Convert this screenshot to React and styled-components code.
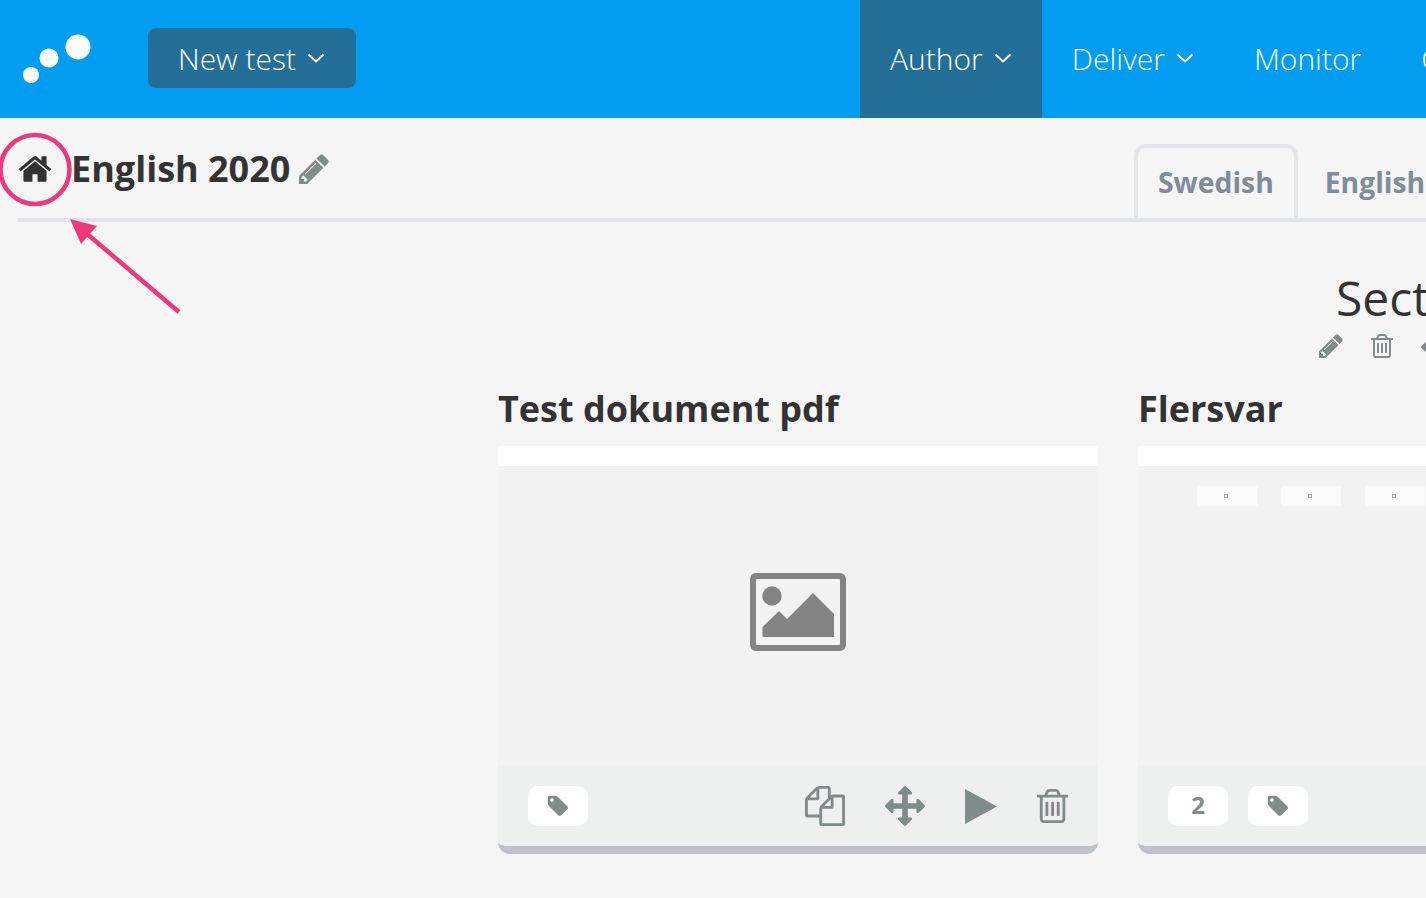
import React from "react"
import styled, { createGlobalStyle } from "styled-components"

const GlobalStyle = createGlobalStyle`
  html, body {
    margin: 0;
    height: 100%;
    overflow: hidden;
    background: #f5f5f5;
    font-family: "Open Sans", "Liberation Sans", sans-serif;
    color: #333333;
  }
`

// each icon keeps its own tight box, so the gaps between icons are real gaps
const ICONS = {
  home: {
    box: [0, 0, 1792, 1792],
    d: "M1472 992v480q0 26-19 45t-45 19h-384v-384h-256v384h-384q-26 0-45-19t-19-45v-480q0-1 .5-3t.5-3l575-474 575 474q1 2 1 6zm223-69l-62 74q-8 9-21 11h-3q-13 0-21-7l-692-577-692 577q-12 8-24 7-13-2-21-11l-62-74q-8-10-7-23.5t11-21.5l719-599q32-26 76-26t76 26l244 204v-195q0-14 9-23t23-9h192q14 0 23 9t9 23v408l219 182q10 8 11 21.5t-7 23.5z",
  },
  pencil: {
    box: [128, 128, 1516, 1536],
    d: "M491 1536l91-91-235-235-91 91v107h128v128h107zm523-928q0-22-22-22-10 0-17 7l-542 542q-7 7-7 17 0 22 22 22 10 0 17-7l542-542q7-7 7-17zm-54-192l416 416-832 832h-416v-416zm683 96q0 53-37 90l-166 166-416-416 166-165q36-38 90-38 53 0 91 38l235 234q37 39 37 91z",
  },
  trash: {
    box: [192, 128, 1408, 1536],
    d: "M704 736v576q0 14-9 23t-23 9h-64q-14 0-23-9t-9-23v-576q0-14 9-23t23-9h64q14 0 23 9t9 23zm256 0v576q0 14-9 23t-23 9h-64q-14 0-23-9t-9-23v-576q0-14 9-23t23-9h64q14 0 23 9t9 23zm256 0v576q0 14-9 23t-23 9h-64q-14 0-23-9t-9-23v-576q0-14 9-23t23-9h64q14 0 23 9t9 23zm128 724v-948h-896v948q0 22 7 40.5t14.5 27 10.5 8.5h832q3 0 10.5-8.5t14.5-27 7-40.5zm-672-1076h448l-48-117q-7-9-17-11h-317q-10 2-17 11zm928 32v64q0 14-9 23t-23 9h-96v948q0 83-47 143.5t-113 60.5h-832q-66 0-113-58.5t-47-141.5v-952h-96q-14 0-23-9t-9-23v-64q0-14 9-23t23-9h309l70-167q15-37 54-63t79-26h320q40 0 79 26t54 63l70 167h309q14 0 23 9t9 23z",
  },
  tag: {
    box: [0, 0, 1792, 1792],
    d: "M576 448q0-53-37.5-90.5t-90.5-37.5-90.5 37.5-37.5 90.5 37.5 90.5 90.5 37.5 90.5-37.5 37.5-90.5zm1067 576q0 53-37 90l-491 492q-39 37-91 37-53 0-90-37l-715-716q-38-37-64.5-101t-26.5-117v-416q0-52 38-90t90-38h416q53 0 117 26.5t102 64.5l715 714q37 39 37 91z",
  },
  move: {
    box: [0, 0, 1792, 1792],
    d: "M1792 896q0 26-19 45l-256 256q-19 19-45 19t-45-19-19-45v-128h-384v384h128q26 0 45 19t19 45-19 45l-256 256q-19 19-45 19t-45-19l-256-256q-19-19-19-45t19-45 45-19h128v-384h-384v128q0 26-19 45t-45 19-45-19l-256-256q-19-19-19-45t19-45l256-256q19-19 45-19t45 19 19 45v128h384v-384h-128q-26 0-45-19t-19-45 19-45l256-256q19-19 45-19t45 19l256 256q19 19 19 45t-19 45-45 19h-128v384h384v-128q0-26 19-45t45-19 45 19l256 256q19 19 19 45z",
  },
  copy: {
    box: [0, 0, 1792, 1792],
    d: "M1696 384q40 0 68 28t28 68v1216q0 40-28 68t-68 28h-960q-40 0-68-28t-28-68v-288h-544q-40 0-68-28t-28-68v-672q0-40 20-88t48-76l408-408q28-28 76-48t88-20h416q40 0 68 28t28 68v328q68-40 128-40h416zm-544 213l-299 299h299v-299zm-640-384l-299 299h299v-299zm196 647l316-316v-416h-384v416q0 40-28 68t-68 28h-416v640h512v-256q0-40 20-88t48-76zm956 804v-1152h-384v416q0 40-28 68t-68 28h-416v640h896z",
  },
  play: {
    box: [0, 0, 32, 35],
    d: "M0 0L32 17.500L0 35Z",
  },
}

const Icon = ({ name, size, color }) => {
  const { box, d } = ICONS[name]
  return (
    <svg
      width={size * box[2] / box[3]}
      height={size}
      viewBox={box.join(" ")}
      fill={color}
      style={{ flex: "none", display: "block" }}
    >
      <path d={d} />
    </svg>
  )
}

const Chevron = () => (
  <svg width="18" height="12" viewBox="0 0 18 12" fill="none" stroke="#fff" strokeWidth="2">
    <path d="M1.5 2.5L9 9.5L16.5 2.5" />
  </svg>
)

/* top bar */
const Header = styled.header`
  display: flex;
  align-items: center;
  height: 118px;
  background: #029cf0;
  white-space: nowrap;
`

const Logo = styled.svg`
  flex: none;
  width: 148px;
  height: 118px;
`

const NewTest = styled.button`
  display: flex;
  flex: none;
  align-items: center;
  gap: 11px;
  width: 208px;
  height: 60px;
  margin-bottom: 2px;
  padding: 0 0 0 30px;
  border: 0;
  border-radius: 8px;
  background: #246f97;
  color: #fff;
  font-family: inherit;
  font-size: 30px;
  font-weight: 300;
`

const Nav = styled.nav`
  display: flex;
  flex: none;
  margin-left: 504px;
  height: 100%;
`

const NavItem = styled.a`
  display: flex;
  align-items: center;
  gap: 11px;
  box-sizing: border-box;
  padding: 0 30px 2px;
  height: 100%;
  color: #fff;
  font-size: 30px;
  font-weight: 300;
  background: ${props => props.$active ? "#246f97" : "transparent"};
`

/* title row */
const TitleBar = styled.div`
  display: flex;
  align-items: flex-end;
  height: 100px;
  margin-left: 18px;
  border-bottom: 4px solid #e1e4e6;
  white-space: nowrap;
`

const TitleGroup = styled.div`
  display: flex;
  flex: none;
  align-items: center;
  box-sizing: border-box;
  width: 1117px;
  height: 100px;
  margin: 0 0 -4px -1px;
  padding-bottom: 6px;
`

const Title = styled.h1`
  margin: 0 9px 0 18px;
  font-size: 36px;
  line-height: 48px;
  font-weight: 700;
  color: #333333;
`

const Tab = styled.div`
  flex: none;
  box-sizing: border-box;
  height: 76px;
  padding: 0 20px;
  margin: 0 3px -2px 0;
  border: 4px solid ${props => props.$active ? "#e3e6e8" : "transparent"};
  border-bottom: 0;
  border-radius: 12px 12px 0 0;
  color: #7f8c9a;
  font-size: 28.3px;
  font-weight: 700;
  line-height: 68px;
`

/* test section */
const Section = styled.section`
  padding-top: 49px;
  white-space: nowrap;
`

const SectionHead = styled.div`
  margin-left: 1319px;
`

const SectionTitle = styled.h2`
  margin: 0 0 0 17px;
  font-size: 48px;
  font-weight: 400;
  line-height: 54px;
  color: #333333;
`

const SectionTools = styled.div`
  display: flex;
  gap: 28px;
  height: 26px;
  margin-top: 9px;
`

const Cards = styled.div`
  display: flex;
  gap: 40px;
  margin: 24px 0 0 498px;
`

const Card = styled.article`
  flex: none;
  width: 600px;
`

const CardTitle = styled.h3`
  margin: 0 0 12px;
  font-size: 36px;
  line-height: 50px;
  font-weight: 700;
  color: #333333;
`

const CardBody = styled.div`
  border-bottom: 8px solid #bdc3c7;
  border-radius: 0 0 12px 12px;
  overflow: hidden;
`

const WhiteStrip = styled.div`
  height: 20px;
  background: #fff;
`

const Preview = styled.div`
  display: ${props => props.$thumbs ? "block" : "flex"};
  align-items: center;
  justify-content: center;
  box-sizing: border-box;
  height: 300px;
  padding: ${props => props.$thumbs ? "20px 0 0 59px" : "0 0 8px"};
  background: #f2f2f2;
`

const Thumbs = styled.div`
  display: flex;
  gap: 24px;
`

const Thumb = styled.div`
  display: flex;
  flex: none;
  align-items: center;
  justify-content: center;
  width: 60px;
  height: 20px;
  background: #fafafa;
  &::after {
    content: "";
    box-sizing: border-box;
    width: 4px;
    height: 4px;
    margin-right: 2px;
    border: 1px solid #b0b0b0;
    background: #eeeeee;
  }
`

const CardFooter = styled.div`
  display: flex;
  align-items: center;
  gap: 20px;
  height: 80px;
  padding: 0 30px;
  background: #eef0f0;
`

const Pill = styled.div`
  display: flex;
  align-items: center;
  justify-content: center;
  box-sizing: border-box;
  width: 60px;
  height: 40px;
  padding-bottom: 3px;
  border-radius: 10px;
  background: #fff;
  color: #7f8c8d;
  font-size: 24px;
  font-weight: 700;
`

const TagPill = styled(Pill)`
  padding: 0 1px 0 0;
`

const Tools = styled.div`
  display: flex;
  align-items: center;
  gap: 40px;
  margin-left: auto;
`

const Annotation = styled.svg`
  position: absolute;
  top: 0;
  left: 0;
  pointer-events: none;
`

const GREY = "#7f8c8a"
const PINK = "#ea3a7c"

const CardActions = () => (
  <Tools>
    <Icon name="copy" size={40} color={GREY} />
    <Icon name="move" size={40} color={GREY} />
    <Icon name="play" size={35} color={GREY} />
    <Icon name="trash" size={34} color={GREY} />
  </Tools>
)

export default function App() {
  return (
    <>
      <GlobalStyle />
      <Header>
        <Logo viewBox="0 0 148 118">
          <circle cx="31" cy="75" r="8" fill="#fff" />
          <circle cx="49" cy="58" r="9.5" fill="#fff" />
          <circle cx="78" cy="47" r="12.5" fill="#fff" />
        </Logo>
        <NewTest>New test <Chevron /></NewTest>
        <Nav>
          <NavItem $active>Author <Chevron /></NavItem>
          <NavItem>Deliver <Chevron /></NavItem>
          <NavItem>Monitor</NavItem>
          <NavItem>Grade</NavItem>
        </Nav>
      </Header>

      <TitleBar>
        <TitleGroup>
          <Icon name="home" size={36} color="#333333" />
          <Title>English 2020</Title>
          <Icon name="pencil" size={30} color={GREY} />
        </TitleGroup>
        <Tab $active>Swedish</Tab>
        <Tab>English</Tab>
      </TitleBar>

      <Section>
        <SectionHead>
          <SectionTitle>Section 1</SectionTitle>
          <SectionTools>
            <Icon name="pencil" size={24} color={GREY} />
            <Icon name="trash" size={24} color={GREY} />
            <Icon name="move" size={26} color={GREY} />
          </SectionTools>
        </SectionHead>

        <Cards>
          <Card>
            <CardTitle>Test dokument pdf</CardTitle>
            <CardBody>
              <WhiteStrip />
              <Preview>
                <svg width="96" height="78" viewBox="0 0 96 78" fill="#848484">
                  <path fillRule="evenodd" d="M6 0h84a6 6 0 0 1 6 6v66a6 6 0 0 1-6 6H6a6 6 0 0 1-6-6V6a6 6 0 0 1 6-6zM7 6a1 1 0 0 0-1 1v64a1 1 0 0 0 1 1h82a1 1 0 0 0 1-1V7a1 1 0 0 0-1-1z" />
                  <circle cx="22" cy="23" r="9.7" />
                  <path d="M12.500 64V54L29 38l8 8 26-26 21 21v23z" />
                </svg>
              </Preview>
              <CardFooter>
                <TagPill><Icon name="tag" size={24} color={GREY} /></TagPill>
                <CardActions />
              </CardFooter>
            </CardBody>
          </Card>

          <Card>
            <CardTitle>Flersvar</CardTitle>
            <CardBody>
              <WhiteStrip />
              <Preview $thumbs>
                <Thumbs>
                  <Thumb />
                  <Thumb />
                  <Thumb />
                  <Thumb />
                </Thumbs>
              </Preview>
              <CardFooter>
                <Pill>2</Pill>
                <TagPill><Icon name="tag" size={24} color={GREY} /></TagPill>
              </CardFooter>
            </CardBody>
          </Card>
        </Cards>
      </Section>

      <Annotation width="200" height="330" viewBox="0 0 200 330" fill="none">
        <circle cx="35" cy="169.500" r="34.500" stroke={PINK} strokeWidth="4.500" />
        <path d="M179 312L86 233" stroke={PINK} strokeWidth="4.500" />
        <path d="M70 219L97 226L81 244Z" fill={PINK} />
      </Annotation>
    </>
  )
}
